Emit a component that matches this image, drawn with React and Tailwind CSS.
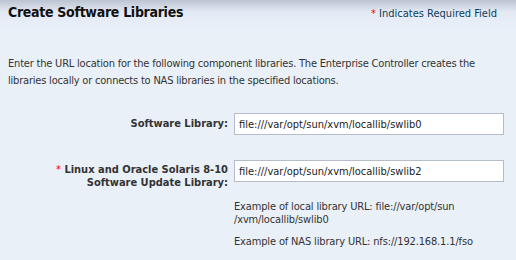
export default function App() {
  return (
    <div
      className="w-[516px] h-[260px] bg-[#eaf0f8] text-[#333] overflow-hidden"
      style={{ fontFamily: '"DejaVu Sans Condensed", "DejaVu Sans", sans-serif' }}
    >
      <div className="h-[30px] bg-gradient-to-b from-[#bcc4d2] via-[#e4eaf4] via-40% to-[#eaf0f8] flex items-start justify-between px-2 pt-[3px]">
        <h1 className="text-[14px] leading-[18px] font-bold text-[#111] tracking-[-0.3px]">Create Software Libraries</h1>
        <p className="text-[11px] leading-[14px] text-[#0a3d5c] pt-[4px] pr-[11px]">
          <span className="text-[#f00]">*</span> Indicates Required Field
        </p>
      </div>

      <p className="px-2 pt-[25px] text-[11px] leading-[17px] tracking-[-0.2px]">
        Enter the URL location for the following component libraries. The Enterprise Controller creates the libraries locally or connects to NAS libraries in the specified locations.
      </p>

      <div className="mt-[24px] flex flex-col gap-[25px]">
        <div className="flex items-center gap-[6px]">
          <label className="w-[228px] text-right text-[11px] font-bold">Software Library:</label>
          <input
            className="w-[270px] h-[22px] border border-[#b5bccb] bg-white px-[4px] text-[11px] text-[#222] outline-none"
            defaultValue="file:///var/opt/sun/xvm/locallib/swlib0"
          />
        </div>

        <div className="flex items-start gap-[6px]">
          <label className="w-[228px] text-right text-[11px] leading-[13px] font-bold pt-[3px]">
            <span className="text-[#f00] font-normal">*</span> Linux and Oracle Solaris 8-10
            <br />
            Software Update Library:
          </label>
          <div className="flex flex-col">
            <input
              className="w-[270px] h-[22px] border border-[#b5bccb] bg-white px-[4px] text-[11px] text-[#222] outline-none"
              defaultValue="file:///var/opt/sun/xvm/locallib/swlib2"
            />
            <p className="mt-[18px] w-[240px] text-[11px] leading-[13px] tracking-[-0.15px]">
              Example of local library URL: file://var/opt/sun /xvm/locallib/swlib0
            </p>
            <p className="mt-[9px] text-[11px] leading-[13px] tracking-[-0.15px]">
              Example of NAS library URL: nfs://192.168.1.1/fso
            </p>
          </div>
        </div>
      </div>
    </div>
  )
}
